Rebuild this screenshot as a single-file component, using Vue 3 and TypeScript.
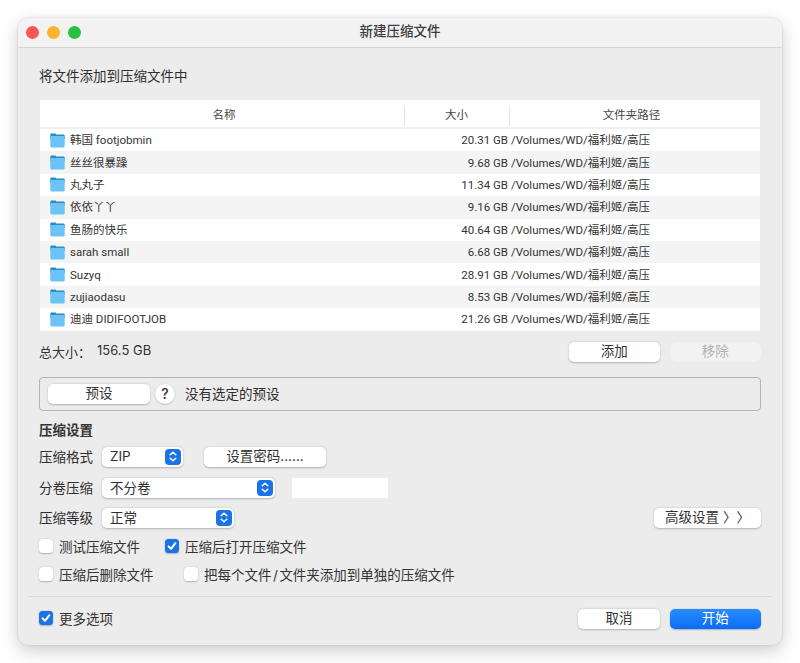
<script setup lang="ts">
interface FileRow {
  name: string
  size: string
}

const path = '/Volumes/WD/福利姬/高压'

const files: FileRow[] = [
  { name: '韩国 footjobmin', size: '20.31 GB' },
  { name: '丝丝很暴躁', size: '9.68 GB' },
  { name: '丸丸子', size: '11.34 GB' },
  { name: '依依丫丫', size: '9.16 GB' },
  { name: '鱼肠的快乐', size: '40.64 GB' },
  { name: 'sarah small', size: '6.68 GB' },
  { name: 'Suzyq', size: '28.91 GB' },
  { name: 'zujiaodasu', size: '8.53 GB' },
  { name: '迪迪 DIDIFOOTJOB', size: '21.26 GB' },
]
</script>

<template>
  <div class="page">
    <div class="window">
      <header class="titlebar">
        <div class="lights">
          <span class="light red"></span>
          <span class="light yellow"></span>
          <span class="light green"></span>
        </div>
        <span class="title">新建压缩文件</span>
      </header>

      <main class="content">
        <p class="intro">将文件添加到压缩文件中</p>

        <div class="table">
          <div class="thead">
            <span class="th th-name">名称</span>
            <span class="th th-size">大小</span>
            <span class="th th-path">文件夹路径</span>
          </div>
          <div class="tbody">
            <div v-for="file in files" :key="file.name" class="row">
              <div class="cell-name">
                <svg class="folder" width="15" height="15" viewBox="0 0 15 15">
                  <path d="M0.3 1.8C0.3 1 0.8 0.6 1.6 0.6H5C5.7 0.6 6 1.1 6.5 1.6H13.4C14.2 1.6 14.7 2 14.7 2.8V6H0.3Z" fill="#2d8bc6" />
                  <path d="M0.3 4.2C0.3 3.5 0.8 3.1 1.5 3.1H13.5C14.2 3.1 14.7 3.5 14.7 4.2V13.3C14.7 14 14.2 14.4 13.5 14.4H1.5C0.8 14.4 0.3 14 0.3 13.3Z" fill="#6cc4f6" />
                </svg>
                <span>{{ file.name }}</span>
              </div>
              <span class="cell-size">{{ file.size }}</span>
              <span class="cell-path">{{ path }}</span>
            </div>
          </div>
        </div>

        <div class="summary">
          <div class="total">
            <span class="total-label">总大小：</span>
            <span>156.5 GB</span>
          </div>
          <div class="summary-actions">
            <button class="btn btn-wide">添加</button>
            <button class="btn btn-wide btn-disabled">移除</button>
          </div>
        </div>

        <div class="preset-box">
          <button class="btn btn-preset">预设</button>
          <span class="help">?</span>
          <span class="preset-text">没有选定的预设</span>
        </div>

        <h2 class="section-title">压缩设置</h2>

        <div class="form-row row-format">
          <span class="label">压缩格式</span>
          <div class="select select-format">
            <span class="select-value">ZIP</span>
            <span class="stepper">
              <svg width="10" height="13" viewBox="0 0 10 13"><path d="M2.2 4.8 5 2.2l2.8 2.6M2.2 8.2 5 10.8l2.8-2.6" fill="none" stroke="#fff" stroke-width="1.5" stroke-linecap="round" stroke-linejoin="round" /></svg>
            </span>
          </div>
          <button class="btn btn-password">设置密码......</button>
        </div>

        <div class="form-row row-split">
          <span class="label">分卷压缩</span>
          <div class="select select-split">
            <span class="select-value">不分卷</span>
            <span class="stepper">
              <svg width="10" height="13" viewBox="0 0 10 13"><path d="M2.2 4.8 5 2.2l2.8 2.6M2.2 8.2 5 10.8l2.8-2.6" fill="none" stroke="#fff" stroke-width="1.5" stroke-linecap="round" stroke-linejoin="round" /></svg>
            </span>
          </div>
          <div class="split-input"></div>
        </div>

        <div class="form-row row-level">
          <span class="label">压缩等级</span>
          <div class="select select-level">
            <span class="select-value">正常</span>
            <span class="stepper">
              <svg width="10" height="13" viewBox="0 0 10 13"><path d="M2.2 4.8 5 2.2l2.8 2.6M2.2 8.2 5 10.8l2.8-2.6" fill="none" stroke="#fff" stroke-width="1.5" stroke-linecap="round" stroke-linejoin="round" /></svg>
            </span>
          </div>
          <button class="btn btn-advanced">高级设置 〉〉</button>
        </div>

        <div class="check-row check-row-first">
          <label class="check check-test"><span class="box"></span>测试压缩文件</label>
          <label class="check">
            <span class="box box-on">
              <svg width="12" height="12" viewBox="0 0 12 12"><path d="M2.6 6.4 5 8.8l4.4-5.6" fill="none" stroke="#fff" stroke-width="2" stroke-linecap="round" stroke-linejoin="round" /></svg>
            </span>
            压缩后打开压缩文件
          </label>
        </div>

        <div class="check-row check-row-second">
          <label class="check check-delete"><span class="box"></span>压缩后删除文件</label>
          <label class="check">
            <span class="box"></span>
            <span>把每个文件<span class="slash">/</span>文件夹添加到单独的压缩文件</span>
          </label>
        </div>
      </main>

      <footer class="footer">
        <label class="check">
          <span class="box box-on">
            <svg width="12" height="12" viewBox="0 0 12 12"><path d="M2.6 6.4 5 8.8l4.4-5.6" fill="none" stroke="#fff" stroke-width="2" stroke-linecap="round" stroke-linejoin="round" /></svg>
          </span>
          更多选项
        </label>
        <div class="footer-actions">
          <button class="btn btn-cancel">取消</button>
          <button class="btn btn-wide btn-primary">开始</button>
        </div>
      </footer>
    </div>
  </div>
</template>

<style>
html,
body {
  margin: 0;
  background: #fff;
}
</style>

<style scoped>
.page {
  width: 800px;
  height: 663px;
  padding: 18px;
  box-sizing: border-box;
  background: #fff;
  font-family: Inter, "Noto Sans CJK SC", sans-serif;
  color: #2e2e2e;
  font-size: 13.5px;
  overflow: hidden;
}

.window {
  width: 764px;
  height: 627px;
  background: #ececec;
  border-radius: 10px;
  box-shadow: 0 6px 18px rgba(0, 0, 0, 0.2), 0 0 3px rgba(0, 0, 0, 0.12);
  display: flex;
  flex-direction: column;
  overflow: hidden;
}

.titlebar {
  height: 29px;
  flex: none;
  position: relative;
  background: #f2f2f2;
  border-bottom: 1px solid #d4d4d4;
  display: flex;
  align-items: center;
  justify-content: center;
}

.lights {
  position: absolute;
  left: 8px;
  top: 8px;
  display: flex;
  gap: 8px;
}

.light {
  width: 13px;
  height: 13px;
  border-radius: 50%;
}

.red { background: #fc5753; }
.yellow { background: #fdb42c; }
.green { background: #28c13f; }

.title {
  font-size: 13.5px;
  font-weight: 500;
  color: #3c3c3c;
  line-height: 27px;
  height: 29px;
}

.content {
  flex: 1;
  padding: 0 21px;
  min-height: 0;
}

.intro {
  margin: 18px 0 0;
  height: 20px;
  line-height: 20px;
}

.table {
  margin: 14px 0 0 1px;
  width: 720px;
  background: #fff;
}

.thead {
  height: 27px;
  display: grid;
  grid-template-columns: 364px 105px 251px;
  border-bottom: 2px solid #f0f0f0;
}

.th {
  font-size: 11.5px;
  color: #444;
  text-align: center;
  line-height: 30px;
  position: relative;
}

.th-name {
  padding-left: 4px;
}

.th-path {
  padding-right: 6px;
}

.th-size::before,
.th-path::before {
  content: "";
  position: absolute;
  left: 0;
  top: 6px;
  bottom: 4px;
  width: 1px;
  background: #e2e2e2;
}

.row {
  height: 22.4px;
  display: grid;
  grid-template-columns: 364px 105px 251px;
  align-items: center;
  font-family: Roboto, "Noto Sans CJK SC", sans-serif;
  font-size: 11.5px;
  line-height: 20px;
  color: #333;
  white-space: nowrap;
}

.row:nth-child(even) {
  background: #f4f4f4;
}

.cell-name {
  display: flex;
  align-items: center;
  padding-left: 9.5px;
  gap: 5.5px;
}

.folder {
  flex: none;
}

.cell-size {
  text-align: right;
  padding-right: 1px;
}

.cell-path {
  padding-left: 2px;
}

.summary {
  margin-top: 11px;
  display: flex;
  align-items: center;
  justify-content: space-between;
  height: 20px;
}

.total {
  display: flex;
  font-size: 13px;
  color: #333;
}

.total-label {
  width: 58px;
}

.summary-actions {
  display: flex;
  gap: 9.5px;
}

.btn {
  border: 0;
  padding: 0 0 2px;
  height: 20px;
  line-height: 18px;
  box-sizing: border-box;
  background: #fff;
  border-radius: 5px;
  font-family: inherit;
  font-size: 13.5px;
  color: #333;
  box-shadow: 0 0.5px 2px rgba(0, 0, 0, 0.25);
  white-space: nowrap;
}

.btn-wide {
  width: 91.5px;
}

.btn-disabled {
  background: #f2f2f2;
  color: #b2b2b2;
  box-shadow: 0 0 1px rgba(0, 0, 0, 0.1);
}

.preset-box {
  margin-top: 15px;
  width: 722px;
  height: 34px;
  box-sizing: border-box;
  border: 1px solid #b4b4b4;
  border-radius: 4px;
  display: flex;
  align-items: center;
  padding-left: 8px;
}

.btn-preset {
  width: 102px;
}

.help {
  width: 20px;
  height: 20px;
  margin-left: 5px;
  border-radius: 50%;
  background: #fff;
  box-shadow: 0 0.5px 2px rgba(0, 0, 0, 0.25);
  text-align: center;
  line-height: 20px;
  font-size: 14px;
  font-weight: 500;
}

.preset-text {
  margin-left: 10px;
  padding-bottom: 2px;
}

.section-title {
  margin: 9px 0 0;
  font-size: 13.5px;
  font-weight: 700;
  height: 20px;
  line-height: 20px;
  color: #333;
}

.form-row {
  display: flex;
  align-items: center;
  height: 20px;
}

.row-format { margin-top: 7px; }
.row-split { margin-top: 11px; }
.row-level { margin-top: 10px; }

.label {
  width: 63px;
  flex: none;
  padding-bottom: 2px;
}

.select {
  height: 20px;
  background: #fff;
  border-radius: 5px;
  box-shadow: 0 0.5px 2px rgba(0, 0, 0, 0.25);
  display: flex;
  align-items: center;
  justify-content: space-between;
  padding-left: 8px;
  padding-right: 2px;
  box-sizing: border-box;
}

.select-value {
  padding-bottom: 2px;
}

.select-format { width: 81px; }
.select-split { width: 173px; }
.select-level { width: 132px; }

.stepper {
  width: 16px;
  height: 16px;
  border-radius: 4px;
  background: #1a74e8;
  display: flex;
  align-items: center;
  justify-content: center;
}

.btn-password {
  width: 122px;
  margin-left: 21px;
}

.split-input {
  width: 96px;
  height: 20px;
  margin-left: 17px;
  background: #fff;
}

.btn-advanced {
  width: 107px;
  margin-left: auto;
  text-spacing-trim: space-all;
}

.check-row {
  display: flex;
  align-items: center;
  height: 20px;
}

.check-row-first { margin-top: 9px; }
.check-row-second { margin-top: 8px; }

.check {
  display: flex;
  align-items: center;
  gap: 6px;
  white-space: nowrap;
  color: #333;
  padding-bottom: 2px;
}

.slash {
  margin: 0 1.5px;
}

.box {
  width: 14px;
  height: 14px;
  border-radius: 3.5px;
  background: #fff;
  box-shadow: 0 0.5px 1.5px rgba(0, 0, 0, 0.25);
  display: flex;
  align-items: center;
  justify-content: center;
  flex: none;
}

.box-on {
  background: #1a74e8;
}

.check-test {
  width: 126px;
}

.check-delete {
  width: 145px;
}

.footer {
  flex: none;
  margin: 0 10px;
  padding: 0 11px;
  height: 49px;
  box-sizing: border-box;
  border-top: 1px solid #dadada;
  display: flex;
  justify-content: space-between;
}

.footer .check {
  height: 20px;
  margin-top: 11px;
}

.footer-actions {
  display: flex;
  gap: 9.5px;
  margin-top: 12px;
}

.btn-cancel {
  width: 82px;
}

.btn-primary {
  background: linear-gradient(#2a8cff, #0a6cf5);
  color: #fff;
  box-shadow: 0 0.5px 1.5px rgba(0, 0, 0, 0.25);
}
</style>
